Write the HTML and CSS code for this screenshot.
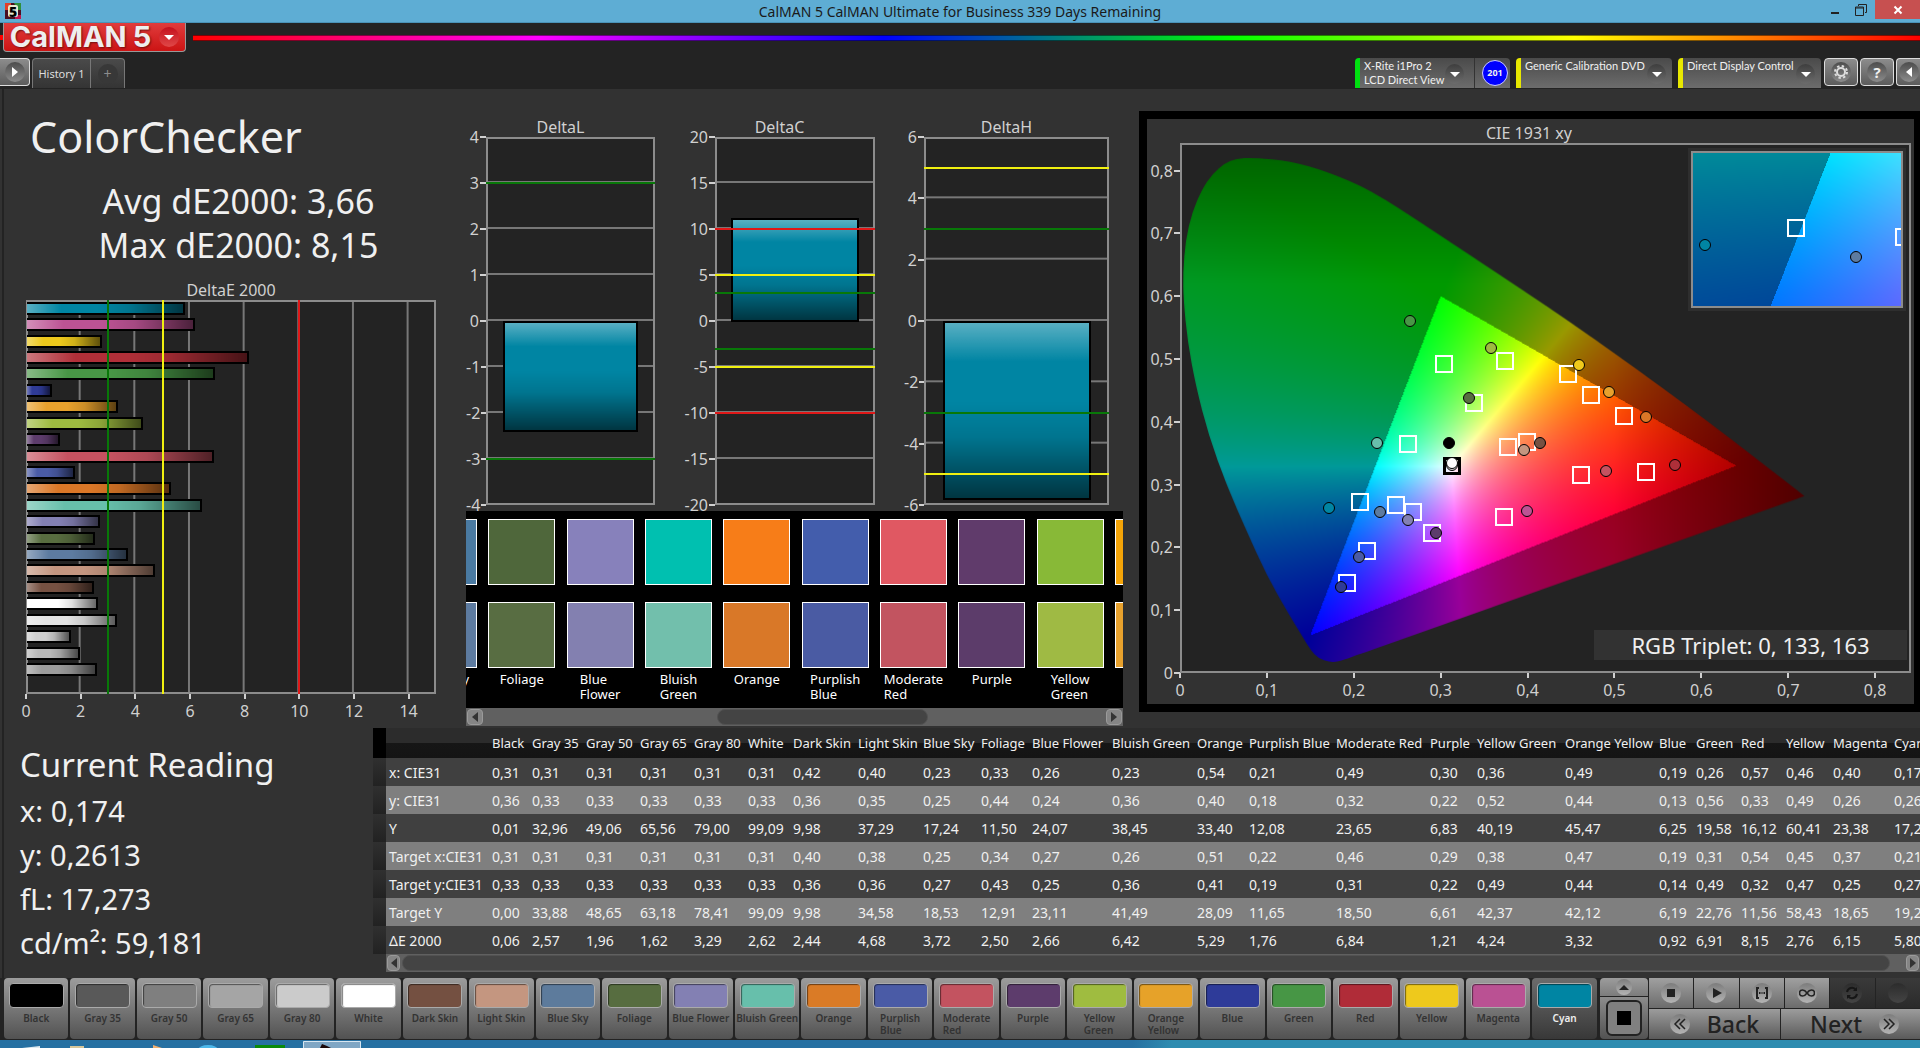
FILE: index.html
```html
<!DOCTYPE html>
<html lang="en">
<head>
<meta charset="utf-8">
<title>CalMAN 5</title>
<link rel="stylesheet" href="styles.css">
</head>
<body>
<div class="titlebar">
  <svg class="app-icon" viewBox="0 0 16 16" width="16" height="16"><rect width="16" height="16" fill="#4a1020"/><path d="M0 0h6v3H3v4H0z" fill="#e0402a"/><path d="M9 0h7v7h-3z" fill="#2f8f3c"/><path d="M10 12h6v4h-6z" fill="#c01850"/><rect x="3" y="2" width="10" height="12" rx="2" fill="#e6ead2"/><text x="4" y="14" font-size="14" font-weight="900">5</text></svg>
  <h1 class="window-title">CalMAN 5 CalMAN Ultimate for Business 339 Days Remaining</h1>
  <div class="window-controls">
    <button class="win-btn" aria-label="Minimize"><svg width="12" height="12" viewBox="0 0 12 12"><path d="M2 8h8v2H2z" fill="#222"/></svg></button>
    <button class="win-btn" aria-label="Restore"><svg width="12" height="12" viewBox="0 0 12 12" fill="none" stroke="#222"><path d="M3.500 2V.5h8v8H10M.5 3h8v8.500h-8zM.5 4h8"/></svg></button>
    <button class="win-btn win-close" aria-label="Close"><svg width="10" height="10" viewBox="0 0 10 10"><path d="M1.500 1.500l7 7M8.500 1.500l-7 7" stroke="#fff" stroke-width="2"/></svg></button>
  </div>
</div>

<header class="app-header">
  <div class="brand-row">
    <span class="rainbow-start"></span>
    <button class="logo"><span>CalMAN</span><span>5</span><i class="knob knob-red"><b class="tri-down"></b></i></button>
    <div class="rainbow"></div>
  </div>
  <div class="tab-row">
    <button class="square-btn play-btn" aria-label="Expand"><i class="knob"><b class="tri-right"></b></i></button>
    <nav class="tabs"><button class="tab">History 1</button><button class="tab tab-add" aria-label="Add tab"><i class="knob knob-dark">+</i></button></nav>
    <div class="devices">
      <div class="device meter"><button class="device-btn"><span>X-Rite i1Pro 2<br>LCD Direct View</span><i class="knob knob-fade"><b class="tri-down"></b></i></button><span class="badge">201</span></div>
      <div class="device source"><button class="device-btn"><span>Generic Calibration DVD</span><i class="knob knob-fade"><b class="tri-down"></b></i></button></div>
      <div class="device display"><button class="device-btn"><span>Direct Display Control</span><i class="knob knob-fade"><b class="tri-down"></b></i></button></div>
      <button class="square-btn" aria-label="Settings"><i class="knob"><svg width="16" height="16" viewBox="0 0 16 16" fill="none" stroke="#ddd"><circle cx="8" cy="8" r="4" stroke-width="2"/><circle cx="8" cy="8" r="6" stroke-width="2" stroke-dasharray="2.400 2.310"/></svg></i></button>
      <button class="square-btn help" aria-label="Help"><i class="knob">?</i></button>
      <button class="square-btn cut" aria-label="Collapse"><i class="knob"><b class="tri-left"></b></i></button>
    </div>
  </div>
</header>

<main class="workspace">
  <section class="overview">
    <h2 class="page-title">ColorChecker</h2>
    <div class="stats"><p>Avg dE2000: 3,66</p><p>Max dE2000: 8,15</p></div>
    <div class="de-chart">
      <h3 class="chart-title">DeltaE 2000</h3>
      <div class="plot de-plot">
        <div class="row"><i class="hbar" style="--v:5.80;--c:#0085a3"></i></div>
        <div class="row"><i class="hbar" style="--v:6.15;--c:#bc5394"></i></div>
        <div class="row"><i class="hbar" style="--v:2.76;--c:#ecc81c"></i></div>
        <div class="row"><i class="hbar" style="--v:8.15;--c:#b02f38"></i></div>
        <div class="row"><i class="hbar" style="--v:6.91;--c:#489646"></i></div>
        <div class="row"><i class="hbar" style="--v:0.92;--c:#2f3b97"></i></div>
        <div class="row"><i class="hbar" style="--v:3.32;--c:#e7a12d"></i></div>
        <div class="row"><i class="hbar" style="--v:4.24;--c:#9ebb40"></i></div>
        <div class="row"><i class="hbar" style="--v:1.21;--c:#5d3c6c"></i></div>
        <div class="row"><i class="hbar" style="--v:6.84;--c:#c55260"></i></div>
        <div class="row"><i class="hbar" style="--v:1.76;--c:#4a5ba6"></i></div>
        <div class="row"><i class="hbar" style="--v:5.29;--c:#da7727"></i></div>
        <div class="row"><i class="hbar" style="--v:6.42;--c:#67bfab"></i></div>
        <div class="row"><i class="hbar" style="--v:2.66;--c:#8380b3"></i></div>
        <div class="row"><i class="hbar" style="--v:2.50;--c:#586d40"></i></div>
        <div class="row"><i class="hbar" style="--v:3.72;--c:#5d7ba0"></i></div>
        <div class="row"><i class="hbar" style="--v:4.68;--c:#c49680"></i></div>
        <div class="row"><i class="hbar" style="--v:2.44;--c:#765142"></i></div>
        <div class="row"><i class="hbar" style="--v:2.62;--c:#ffffff"></i></div>
        <div class="row"><i class="hbar" style="--v:3.29;--c:#e4e4e4"></i></div>
        <div class="row"><i class="hbar" style="--v:1.62;--c:#cecece"></i></div>
        <div class="row"><i class="hbar" style="--v:1.96;--c:#b8b8b8"></i></div>
        <div class="row"><i class="hbar" style="--v:2.57;--c:#9c9c9c"></i></div>
        <div class="row"></div>
        <i class="vlimit ok" style="left:20%"></i><i class="vlimit warn" style="left:33.330%"></i><i class="vlimit bad" style="left:66.670%"></i>
      </div>
      <div class="x-axis de-axis"><span>0</span><span>2</span><span>4</span><span>6</span><span>8</span><span>10</span><span>12</span><span>14</span></div>
    </div>
  </section>

  <section class="deltas">
    <div class="delta-charts">
      <div class="delta l">
        <h3 class="chart-title">DeltaL</h3>
        <div class="y-axis"><span>4</span><span>3</span><span>2</span><span>1</span><span>0</span><span>-1</span><span>-2</span><span>-3</span><span>-4</span></div>
        <div class="plot">
          <i class="vbar" style="top:50%;height:30.200%"></i>
          <i class="hlimit ok" style="top:12.500%"></i><i class="hlimit ok" style="top:87.500%"></i>
        </div>
      </div>
      <div class="delta c">
        <h3 class="chart-title">DeltaC</h3>
        <div class="y-axis"><span>20</span><span>15</span><span>10</span><span>5</span><span>0</span><span>-5</span><span>-10</span><span>-15</span><span>-20</span></div>
        <div class="plot">
          <i class="vbar" style="top:22%;height:28.200%"></i>
          <i class="hlimit bad" style="top:25%"></i><i class="hlimit warn" style="top:37.500%"></i><i class="hlimit ok" style="top:42.500%"></i>
          <i class="hlimit ok" style="top:57.500%"></i><i class="hlimit warn" style="top:62.500%"></i><i class="hlimit bad" style="top:75%"></i>
        </div>
      </div>
      <div class="delta h">
        <h3 class="chart-title">DeltaH</h3>
        <div class="y-axis"><span>6</span><span>4</span><span>2</span><span>0</span><span>-2</span><span>-4</span><span>-6</span></div>
        <div class="plot">
          <i class="vbar" style="top:50%;height:48.700%"></i>
          <i class="hlimit warn" style="top:8.330%"></i><i class="hlimit ok" style="top:25%"></i>
          <i class="hlimit ok" style="top:75%"></i><i class="hlimit warn" style="top:91.670%"></i>
        </div>
      </div>
    </div>
    <div class="compare">
      <div class="compare-track">
        <div class="pair"><i style="background:#4a7aa2"></i><i style="background:#5d7ba0"></i><span>Blue Sky</span></div>
        <div class="pair"><i style="background:#4f673b"></i><i style="background:#586d42"></i><span>Foliage</span></div>
        <div class="pair"><i style="background:#8781bb"></i><i style="background:#8380b0"></i><span>Blue<br>Flower</span></div>
        <div class="pair"><i style="background:#00c0b0"></i><i style="background:#72bfac"></i><span>Bluish<br>Green</span></div>
        <div class="pair"><i style="background:#f77d18"></i><i style="background:#d97828"></i><span>Orange</span></div>
        <div class="pair"><i style="background:#435dac"></i><i style="background:#4a5ba3"></i><span>Purplish<br>Blue</span></div>
        <div class="pair"><i style="background:#e05862"></i><i style="background:#c25460"></i><span>Moderate<br>Red</span></div>
        <div class="pair"><i style="background:#603b6b"></i><i style="background:#5c3c6a"></i><span>Purple</span></div>
        <div class="pair"><i style="background:#88b937"></i><i style="background:#9fba44"></i><span>Yellow<br>Green</span></div>
        <div class="pair"><i style="background:#f4a408"></i><i style="background:#e7a12d"></i><span>Orange<br>Yellow</span></div>
      </div>
    </div>
    <div class="scrollbar compare-scroll"><button aria-label="Scroll left"><b class="tri-left"></b></button><div class="track"><i class="thumb"></i></div><button aria-label="Scroll right"><b class="tri-right"></b></button></div>
  </section>

  <section class="cie">
    <h3 class="chart-title">CIE 1931 xy</h3>
    <div class="y-axis cie-y"><span>0,8</span><span>0,7</span><span>0,6</span><span>0,5</span><span>0,4</span><span>0,3</span><span>0,2</span><span>0,1</span><span>0</span></div>
    <div class="plot cie-plot" id="diagram">
      <canvas width="730" height="528"></canvas>
      <div class="inset" id="inset"><canvas width="208" height="152"></canvas></div>
      <div class="triplet">RGB Triplet: 0, 133, 163</div>
    </div>
    <div class="x-axis cie-x"><span>0</span><span>0,1</span><span>0,2</span><span>0,3</span><span>0,4</span><span>0,5</span><span>0,6</span><span>0,7</span><span>0,8</span></div>
  </section>
</main>

<section class="results">
  <div class="reading">
    <h2>Current Reading</h2>
    <p>x: 0,174</p><p>y: 0,2613</p><p>fL: 17,273</p><p>cd/m²: 59,181</p>
  </div>
  <div class="grid-wrap">
    <table>
      <colgroup><col style="width:13px"><col style="width:103px"><col style="width:40px"><col style="width:54px"><col style="width:54px"><col style="width:54px"><col style="width:54px"><col style="width:45px"><col style="width:65px"><col style="width:65px"><col style="width:58px"><col style="width:51px"><col style="width:80px"><col style="width:85px"><col style="width:52px"><col style="width:87px"><col style="width:94px"><col style="width:47px"><col style="width:88px"><col style="width:94px"><col style="width:37px"><col style="width:45px"><col style="width:45px"><col style="width:47px"><col style="width:61px"><col style="width:45px"></colgroup>
      <thead><tr><td class="sel"></td><td></td><th>Black</th><th>Gray 35</th><th>Gray 50</th><th>Gray 65</th><th>Gray 80</th><th>White</th><th>Dark Skin</th><th>Light Skin</th><th>Blue Sky</th><th>Foliage</th><th>Blue Flower</th><th>Bluish Green</th><th>Orange</th><th>Purplish Blue</th><th>Moderate Red</th><th>Purple</th><th>Yellow Green</th><th>Orange Yellow</th><th>Blue</th><th>Green</th><th>Red</th><th>Yellow</th><th>Magenta</th><th>Cyan</th></tr></thead>
      <tbody>
      <tr><td class="sel"></td><th>x: CIE31</th><td>0,31</td><td>0,31</td><td>0,31</td><td>0,31</td><td>0,31</td><td>0,31</td><td>0,42</td><td>0,40</td><td>0,23</td><td>0,33</td><td>0,26</td><td>0,23</td><td>0,54</td><td>0,21</td><td>0,49</td><td>0,30</td><td>0,36</td><td>0,49</td><td>0,19</td><td>0,26</td><td>0,57</td><td>0,46</td><td>0,40</td><td>0,17</td></tr>
      <tr><td class="sel"></td><th>y: CIE31</th><td>0,36</td><td>0,33</td><td>0,33</td><td>0,33</td><td>0,33</td><td>0,33</td><td>0,36</td><td>0,35</td><td>0,25</td><td>0,44</td><td>0,24</td><td>0,36</td><td>0,40</td><td>0,18</td><td>0,32</td><td>0,22</td><td>0,52</td><td>0,44</td><td>0,13</td><td>0,56</td><td>0,33</td><td>0,49</td><td>0,26</td><td>0,26</td></tr>
      <tr><td class="sel"></td><th>Y</th><td>0,01</td><td>32,96</td><td>49,06</td><td>65,56</td><td>79,00</td><td>99,09</td><td>9,98</td><td>37,29</td><td>17,24</td><td>11,50</td><td>24,07</td><td>38,45</td><td>33,40</td><td>12,08</td><td>23,65</td><td>6,83</td><td>40,19</td><td>45,47</td><td>6,25</td><td>19,58</td><td>16,12</td><td>60,41</td><td>23,38</td><td>17,27</td></tr>
      <tr><td class="sel"></td><th>Target x:CIE31</th><td>0,31</td><td>0,31</td><td>0,31</td><td>0,31</td><td>0,31</td><td>0,31</td><td>0,40</td><td>0,38</td><td>0,25</td><td>0,34</td><td>0,27</td><td>0,26</td><td>0,51</td><td>0,22</td><td>0,46</td><td>0,29</td><td>0,38</td><td>0,47</td><td>0,19</td><td>0,31</td><td>0,54</td><td>0,45</td><td>0,37</td><td>0,21</td></tr>
      <tr><td class="sel"></td><th>Target y:CIE31</th><td>0,33</td><td>0,33</td><td>0,33</td><td>0,33</td><td>0,33</td><td>0,33</td><td>0,36</td><td>0,36</td><td>0,27</td><td>0,43</td><td>0,25</td><td>0,36</td><td>0,41</td><td>0,19</td><td>0,31</td><td>0,22</td><td>0,49</td><td>0,44</td><td>0,14</td><td>0,49</td><td>0,32</td><td>0,47</td><td>0,25</td><td>0,27</td></tr>
      <tr><td class="sel"></td><th>Target Y</th><td>0,00</td><td>33,88</td><td>48,65</td><td>63,18</td><td>78,41</td><td>99,09</td><td>9,98</td><td>34,58</td><td>18,53</td><td>12,91</td><td>23,11</td><td>41,49</td><td>28,09</td><td>11,65</td><td>18,50</td><td>6,61</td><td>42,37</td><td>42,12</td><td>6,19</td><td>22,76</td><td>11,56</td><td>58,43</td><td>18,65</td><td>19,20</td></tr>
      <tr><td class="sel"></td><th>ΔE 2000</th><td>0,06</td><td>2,57</td><td>1,96</td><td>1,62</td><td>3,29</td><td>2,62</td><td>2,44</td><td>4,68</td><td>3,72</td><td>2,50</td><td>2,66</td><td>6,42</td><td>5,29</td><td>1,76</td><td>6,84</td><td>1,21</td><td>4,24</td><td>3,32</td><td>0,92</td><td>6,91</td><td>8,15</td><td>2,76</td><td>6,15</td><td>5,80</td></tr>
      </tbody>
    </table>
    <div class="scrollbar table-scroll"><button aria-label="Scroll left"><b class="tri-left"></b></button><div class="track"><i class="thumb"></i></div><button aria-label="Scroll right"><b class="tri-right"></b></button></div>
  </div>
</section>

<footer class="patches">
  <div class="patch-list">
    <button><i style="background:#000000"></i><span>Black</span></button>
    <button><i style="background:#595959"></i><span>Gray 35</span></button>
    <button><i style="background:#7f7f7f"></i><span>Gray 50</span></button>
    <button><i style="background:#a5a5a5"></i><span>Gray 65</span></button>
    <button><i style="background:#cbcbcb"></i><span>Gray 80</span></button>
    <button><i style="background:#ffffff"></i><span>White</span></button>
    <button><i style="background:#745041"></i><span>Dark Skin</span></button>
    <button><i style="background:#c49680"></i><span>Light Skin</span></button>
    <button><i style="background:#5d7b9c"></i><span>Blue Sky</span></button>
    <button><i style="background:#576d40"></i><span>Foliage</span></button>
    <button><i style="background:#8380b3"></i><span>Blue Flower</span></button>
    <button><i style="background:#67bfab"></i><span>Bluish Green</span></button>
    <button><i style="background:#da7b26"></i><span>Orange</span></button>
    <button><i style="background:#4a5ba6"></i><span>Purplish<br>Blue</span></button>
    <button><i style="background:#c35360"></i><span>Moderate<br>Red</span></button>
    <button><i style="background:#5d3c6c"></i><span>Purple</span></button>
    <button><i style="background:#9fbc40"></i><span>Yellow<br>Green</span></button>
    <button><i style="background:#e6a229"></i><span>Orange<br>Yellow</span></button>
    <button><i style="background:#2e3b99"></i><span>Blue</span></button>
    <button><i style="background:#479645"></i><span>Green</span></button>
    <button><i style="background:#b02c38"></i><span>Red</span></button>
    <button><i style="background:#eec91c"></i><span>Yellow</span></button>
    <button><i style="background:#ba5193"></i><span>Magenta</span></button>
    <button class="active"><i style="background:#0085a3"></i><span>Cyan</span></button>
  </div>
  <div class="pattern">
    <button class="up" aria-label="More patterns"><i class="knob knob-light"><b class="tri-up"></b></i></button>
    <button class="window-pattern" aria-label="Window pattern"><i></i></button>
  </div>
  <div class="transport">
    <div class="transport-row">
      <button aria-label="Stop"><i class="knob knob-light"><svg width="16" height="16"><path d="M4 4h8v8H4z" fill="#222"/></svg></i></button>
      <button aria-label="Play"><i class="knob knob-light"><svg width="16" height="16"><path d="M5 3l9 5-9 5z" fill="#222"/></svg></i></button>
      <button aria-label="Read series"><i class="knob knob-light"><svg width="16" height="16" fill="none" stroke="#222" stroke-width="2"><path d="M5 3H3v10h2M11 3h2v10h-2M5 8h1.500M7.500 8h1M9.500 8H11"/></svg></i></button>
      <button aria-label="Continuous"><i class="knob knob-light"><svg width="16" height="16" fill="none" stroke="#222" stroke-width="1.500"><path d="M8 8C6 5 4.500 5 3.500 5a3 3 0 000 6C4.500 11 6 11 8 8s3.500-3 4.500-3a3 3 0 010 6C11.500 11 10 11 8 8z"/></svg></i></button>
      <button class="off" aria-label="Refresh"><i class="knob knob-off"><svg width="16" height="16" fill="none" stroke="#161616" stroke-width="2"><path d="M3 7a5 5 0 019-2M13 9a5 5 0 01-9 2"/><path d="M13 2v4H9zM3 14v-4h4z" fill="#161616" stroke="none"/></svg></i></button>
      <button class="off" aria-label="Record"><i class="knob knob-off"></i></button>
    </div>
    <div class="nav-row">
      <button><i class="knob knob-light"><svg width="14" height="14" fill="none" stroke="#222" stroke-width="1.500"><path d="M7 2L2 7l5 5M12 2L7 7l5 5"/></svg></i>Back</button>
      <button class="next">Next<i class="knob knob-light"><svg width="14" height="14" fill="none" stroke="#222" stroke-width="1.500"><path d="M2 2l5 5-5 5M7 2l5 5-5 5"/></svg></i></button>
    </div>
  </div>
</footer>
<div class="taskbar">
  <svg width="370" height="8" viewBox="0 0 370 8"><path d="M22 8l18-2v2z" fill="#dfeaf0"/><path d="M70 6h14v2H70z" fill="#d8c79a"/><path d="M153 5l9 3h-9z" fill="#f0b070"/><ellipse cx="208" cy="10" rx="10" ry="5" fill="#4db8ea"/><path d="M255 5h30v3h-30z" fill="#0a8a0a"/><path d="M303.500 8V1.500h57V8" fill="#7fa6c4" stroke="#d8e6f0"/><path d="M320 8l2-4 5 2 4 2z" fill="#1c0808"/></svg>
</div>
<script src="app.js"></script>
</body>
</html>
```
FILE: styles.css
```css
* { box-sizing: border-box; }
body {
  margin: 0;
  min-height: 100vh;
  display: flex;
  flex-direction: column;
  overflow: hidden;
  background: #323232;
  color: #f0f0f0;
  font-family: "Noto Sans", "Open Sans", sans-serif;
  font-size: 16px;
}
h1, h2, h3, p { margin: 0; font-weight: 400; }
button { font: inherit; color: inherit; padding: 0; border: 0; background: none; display: flex; align-items: center; justify-content: center; }
i { font-style: normal; display: block; }

/* arrows */
.tri-down, .tri-up, .tri-left, .tri-right { display: block; border: 5px solid transparent; }
.tri-down { border-top-color: #fff; border-bottom: 0; }
.tri-up { border-bottom-color: #222; border-top: 0; }
.tri-left { border-right: 6px solid #fff; border-left: 0; }
.tri-right { border-left: 6px solid #fff; border-right: 0; }
.knob {
  width: 20px; height: 20px; flex: none; border-radius: 50%;
  display: flex; align-items: center; justify-content: center;
  background: linear-gradient(#4c4c4c, #8c8c8c);
}
.knob-red { background: linear-gradient(#c4101c, #e04848); }
.knob-dark { background: #383838; color: #8c8c8c; font-size: 14px; }
.knob-fade { background: linear-gradient(#3e3e3e, #6c6c6c); }
.knob-light { background: linear-gradient(#7c7c7c, #b4b4b4); }
.knob-off { background: linear-gradient(#2c2c2c, #444); }

/* window title */
.titlebar {
  display: grid; grid-template-columns: 1fr auto 1fr;
  height: 23px; background: #5eadd4; border-bottom: 1px solid #4a93b8;
}
.app-icon { margin: 3px 5px; }
.window-title { font-size: 14px; line-height: 23px; color: #1a1a1a; }
.window-controls { display: flex; justify-content: flex-end; align-items: flex-start; }
.win-btn { width: 24px; height: 19px; margin-right: 2px; }
.win-close { width: 45px; margin: 0; background: #c75050; }

/* brand, tabs, devices */
.app-header { background: #232323; padding-bottom: 1px; }
.brand-row { display: flex; align-items: center; }
.rainbow-start { width: 3px; height: 5px; background: #f00; }
.logo {
  width: 183px; height: 29px; gap: 6px; flex: none;
  background: linear-gradient(#e03c3c, #cc1414);
  border: 1px solid #999; border-top: 0; border-radius: 0 0 4px 4px;
  font: 700 29px/26px "Inter", sans-serif; color: #eee; text-shadow: 1px 1px 2px #701010;
}
.logo .knob { margin-left: 2px; }
.rainbow {
  flex: 1; height: 6px; margin-left: 7px;
  border: 1px solid rgba(0, 0, 0, .5); border-width: 1px 0;
  background: linear-gradient(90deg, #f00, #f0f, #00f, #0f0, #ff0, #f00);
}
.tab-row { display: flex; padding-top: 6px; height: 36px; }
.square-btn {
  width: 34px; height: 28px; flex: none;
  background: linear-gradient(#8c8c8c, #5c5c5c); border: 1px solid #ddd; border-radius: 4px;
}
.square-btn.play-btn { width: 30px; border-left: 0; border-radius: 0 4px 4px 0; }
.square-btn.cut { width: 24px; border-right: 0; border-radius: 4px 0 0 4px; }
.square-btn.help { font-size: 15px; font-weight: 700; }
.tabs { display: flex; margin-left: 2px; border: 1px solid #777; border-bottom: 0; border-radius: 4px 4px 0 0; background: linear-gradient(#4a4a4a, #343434); }
.tab { width: 57px; font-size: 11px; color: #ddd; }
.tab-add { width: 34px; border-left: 1px solid #777; }
.devices { display: flex; gap: 2px; margin-left: auto; }
.device {
  display: flex; align-items: center; margin-right: 4px;
  border-left: 5px solid #e8e800; border-radius: 4px 4px 0 0;
  background: linear-gradient(#4a4a4a, #6c6c6c); font: 11px/14px "Lato", sans-serif;
}
.device.meter { width: 155px; border-left-color: #00e010; }
.device.source { width: 156px; }
.device.display { width: 143px; margin-right: 1px; }
.device-btn { flex: 1; align-self: stretch; justify-content: space-between; align-items: flex-start; padding: 1px 6px 0 4px; text-align: left; white-space: nowrap; }
.device-btn .knob { margin-top: 5px; width: 19px; }
.meter .device-btn { padding-right: 10px; border-right: 1px solid #333; }
.badge {
  width: 26px; height: 26px; margin: 0 2px 0 7px; border-radius: 50%; border: 1px solid #ccf;
  background: #00f; font: 700 9px/24px "Noto Sans", sans-serif; text-align: center;
}

/* workspace */
.workspace {
  flex: 1; display: grid; grid-template-columns: 446fr 689fr 781fr;
  margin-left: 2px; border-left: 2px solid #232323;
}
.workspace > * { min-width: 0; }
.chart-title { font-size: 16px; line-height: 20px; text-align: center; color: #d0d0d0; }
.plot { position: relative; background-color: #232323; box-shadow: inset 0 0 0 2px #8c8c8c; min-width: 0; }
.x-axis, .y-axis { display: flex; justify-content: space-between; color: #d0d0d0; font-size: 16px; }
.y-axis { flex-direction: column; }
.y-axis span { height: 0; display: flex; align-items: center; justify-content: flex-end; gap: 1px; }
.y-axis span::after { content: ""; width: 6px; height: 2px; background: #d0d0d0; }
.x-axis span { width: 0; display: flex; flex-direction: column; align-items: center; line-height: 20px; }
.x-axis span::before { content: ""; width: 2px; height: 5px; margin-bottom: 2px; background: #d0d0d0; }
.ok { background: #087808; }
.warn { background: #f0f010; }
.bad { background: #e01818; }

.overview { padding: 20px 14px 7px 22px; display: flex; flex-direction: column; }
.page-title { font-size: 43px; line-height: 56px; margin-left: 4px; }
.stats { margin: 14px 0 13px; font-size: 34px; line-height: 44px; text-align: center; padding-left: 15px; white-space: nowrap; }
.de-chart { flex: 1; display: flex; flex-direction: column; }
.de-plot {
  flex: 1; display: flex; flex-direction: column; padding-left: 1px;
  background-image: linear-gradient(90deg, transparent calc(100% - 2px), #777 0);
  background-size: calc(100% * 2 / 15) 100%;
}
.row { flex: 1; display: flex; align-items: center; }
.hbar {
  height: 13px; width: calc(var(--v) / 15 * 100%); border: 2px solid #000; border-left: 0;
  background: linear-gradient(90deg, rgba(255,255,255,.35), transparent 22%, transparent 45%, rgba(0,0,0,.12) 65%, rgba(0,0,0,.6)), var(--c);
}
.vlimit { position: absolute; top: 0; bottom: 0; width: 2px; margin-left: -1px; }
.de-axis { padding-right: calc(100% / 15); }

/* delta charts */
.deltas { padding: 28px 16px 2px; display: flex; flex-direction: column; }
.delta-charts { flex: 1; display: flex; gap: 29px; padding: 0 14px 6px 0; }
.delta { display: grid; grid-template: 20px 1fr / 20px 1fr; }
.delta .chart-title { grid-column: 1 / -1; }
.delta.l { flex: 189; }
.delta.c { flex: 191; grid-template-columns: 31px 1fr; }
.delta.h { flex: 205; }
.delta .plot {
  background-image: linear-gradient(transparent calc(100% - 2px), #777 0);
  background-size: 100% 12.500%;
}
.delta.h .plot { background-size: 100% calc(100% / 6); }
.vbar {
  position: absolute; left: 10%; width: 80%; border: 2px solid #000;
  background: linear-gradient(rgba(255,255,255,.35), transparent 22%, transparent 45%, rgba(0,0,0,.12) 65%, rgba(0,0,0,.6)), #0085a3;
}
.hlimit { position: absolute; left: 0; right: 0; height: 2px; margin-top: -1px; }

/* colour comparison */
.compare { background: #000; overflow: hidden; height: 197px; position: relative; }
.compare-track { display: flex; justify-content: space-between; width: 772px; margin-left: -56px; padding-top: 8px; }
.pair { width: 67px; flex: none; text-align: center; font-size: 13px; line-height: 15px; color: #fff; }
.pair i { height: 66px; border: 1px solid #fff; margin-bottom: 17px; }
.pair i + i { margin-bottom: 4px; }
.pair span { display: inline-block; text-align: left; }

.scrollbar { display: flex; height: 18px; background: #606060; padding: 1px; }
.scrollbar button { width: 16px; background: #858585; border: 1px solid #9a9a9a; border-radius: 4px; }
.scrollbar .tri-left { border-right-color: #333; }
.scrollbar .tri-right { border-left-color: #333; }
.track { flex: 1; }
.thumb { height: 16px; background: #444; border-radius: 8px; border: 1px solid #525252; }
.compare-scroll .thumb { width: 34%; margin-left: 37.500%; }

/* chromaticity diagram */
.cie {
  margin: 22px 0 16px; border: 8px solid #000; border-right-width: 6px; padding: 4px 3px 2px 0;
  display: grid; grid-template: 20px 1fr 29px / 33px 1fr;
}
.cie .chart-title { grid-column: 1 / -1; }
.cie-y { height: 94.800%; align-self: end; }
.cie-plot canvas { display: block; width: 100%; height: 100%; position: absolute; left: 0; top: 0; }
.cie-x { grid-column: 2; width: 95.100%; }
.inset { position: absolute; right: 8px; top: 8px; width: 212px; height: 157px; border: 2px solid #8c8c8c; overflow: hidden; outline: 3px solid #2e2e2e; }
.triplet { position: absolute; right: 4px; bottom: 13px; width: 313px; line-height: 30px; background: #323232; font-size: 22px; text-align: center; }
.target, .measured { position: absolute; transform: translate(-50%, 50%); }
.target { width: 18px; height: 18px; border: 2px solid #fff; }
.target.white-point { border-color: #000; border-width: 3px; }
.measured { width: 12px; height: 12px; border-radius: 50%; border: 1px solid #000; }

/* results */
.results { display: grid; grid-template-columns: 369fr 1547fr; margin-left: 2px; border-left: 2px solid #232323; padding-bottom: 6px; }
.results > * { min-width: 0; }
.reading { padding: 13px 0 0 16px; font-size: 29px; line-height: 44px; }
.reading h2 { font-size: 33px; line-height: 48px; }
.grid-wrap { overflow: hidden; }
table { table-layout: fixed; width: 1563px; border-collapse: collapse; font-size: 14px; white-space: nowrap; }
th, td { padding: 0 0 0 3px; height: 28px; font-weight: 400; text-align: left; }
thead th, thead td { height: 30px; font-size: 13px; background: linear-gradient(#2c2c2c 50%, #161616 50%, #141414); }
tbody tr { background: #404040; }
tbody tr:nth-child(even) { background: #7f7f7f; }
.sel { background: linear-gradient(#303030, #222); }
thead .sel { background: #000; }
.table-scroll { margin-left: 13px; }
.table-scroll button { width: 13px; }
.table-scroll .thumb { margin: 0 16px 0 2px; }

/* patches and transport */
.patches { display: flex; gap: 1px; background: #232323; padding: 0 0 1px 4px; height: 62px; }
.patch-list { flex: 1; display: flex; gap: 2px; margin-right: 2px; }
.patch-list button {
  flex: 1 1 0; min-width: 0; flex-direction: column; justify-content: flex-start; padding-top: 5px; gap: 4px;
  background: linear-gradient(#9c9c9c, #525252); border-radius: 4px; color: #333;
  font-size: 10px; font-weight: 600; line-height: 12px; white-space: nowrap;
}
.patch-list i { width: 55px; height: 25px; border-radius: 4px; border: 1px solid #aaa; box-shadow: inset 1px 1px 1px rgba(0, 0, 0, .5); }
.patch-list span { text-align: left; }
.patch-list .active { background: linear-gradient(#6c6c6c, #383838); color: #eee; }
.pattern { width: 48px; display: flex; flex-direction: column; gap: 1px; }
.pattern button { background: linear-gradient(#9c9c9c, #7c7c7c); border-radius: 4px 4px 0 0; }
.pattern .up { height: 18px; }
.pattern .up .knob { width: 16px; height: 16px; }
.pattern .window-pattern { flex: 1; background: linear-gradient(#8c8c8c, #525252); border-radius: 0 0 4px 4px; }
.window-pattern i { width: 32px; height: 32px; border: 9px solid #808080; outline: 2px solid #222; border-radius: 4px; background: #000; }
.transport { width: 271px; display: flex; flex-direction: column; gap: 1px; }
.transport-row, .nav-row { flex: 1; display: flex; gap: 1px; }
.transport button { flex: 1; background: linear-gradient(#a0a0a0, #6c6c6c); }
.transport .off { background: linear-gradient(#3a3a3a, #2a2a2a); }
.transport .nav-row button { background: linear-gradient(#9c9c9c, #5a5a5a); font-size: 23px; font-weight: 500; line-height: 30px; gap: 17px; color: #222; }
.nav-row .next { padding-left: 8px; }

.taskbar { height: 8px; background: linear-gradient(100deg, #2670a2 59%, #2e8cb0 61%); }
.taskbar svg { display: block; }
```
FILE: app.js
```js
// Spectral boundary of the diagram, as CIE 1931 x, y pairs.
const LOCUS = [
  [.1726,.0173],[.159,.0237],[.1505,.0365],[.1406,.0589],[.1214,.1025],[.0994,.157],[.0779,.2223],[.0535,.2992],
  [.0331,.378],[.018,.458],[.0087,.5285],[.0041,.5926],[.0035,.6374],[.0064,.6887],[.0139,.7335],[.0256,.7707],
  [.0372,.7944],[.0517,.8117],[.0645,.8187],[.0837,.8206],[.1273,.8149],[.1679,.7989],[.2191,.7694],[.29,.7053],
  [.3655,.6361],[.4352,.5721],[.5224,.4875],[.6095,.3985],[.6618,.3427],[.7187,.2819],[.7185,.2815],[.1912,.0218],[.1807,.0179]
];
const GAMUT = [[.64, .33], [.3, .6], [.15, .06]];
const TARGETS = [
  [.3039,.492],[.3742,.4965],[.4468,.4753],[.4736,.4427],[.5113,.4094],[.3388,.4305],[.2621,.3645],[.3777,.36],
  [.3998,.3671],[.4614,.3152],[.5363,.3203],[.2069,.2723],[.2487,.2671],[.2684,.2562],[.373,.2479],[.29,.2229],
  [.2156,.1941],[.1923,.1429]
];
const MEASURED = [
  [.265,.5605,'#499746'],[.3579,.5176,'#9ebb40'],[.4596,.4901,'#efc91b'],[.4939,.4471,'#e7a12d'],
  [.5363,.4074,'#da7727'],[.333,.4382,'#576d40'],[.2266,.3658,'#67bfab'],[.3097,.3658,'#000'],
  [.4143,.3658,'#765142'],[.3963,.3549,'#c49680'],[.4904,.3216,'#c55260'],[.57,.3312,'#ae2f39'],
  [.172,.2627,'#0085a3'],[.2301,.2562,'#5d7ba0'],[.2626,.2434,'#8380b3'],[.2952,.2223,'#5d3c6c'],
  [.3998,.2575,'#bc5394'],[.2063,.1845,'#4a5ba6'],[.1854,.1377,'#2f3b97'],[.3132,.331,'#ccc'],[.3132,.335,'#fff']
];

function inGamut(x, y) {
  return GAMUT.every((a, i) => {
    const b = GAMUT[(i + 1) % 3];
    return (b[0] - a[0]) * (y - a[1]) - (b[1] - a[1]) * (x - a[0]) >= 0;
  });
}

function colour(x, y) {
  const X = x / y, Z = (1 - x - y) / y;
  const rgb = [
    3.2406 * X - 1.5372 - 0.4986 * Z,
    -0.9689 * X + 1.8758 + 0.0415 * Z,
    0.0557 * X - 0.204 + 1.057 * Z
  ].map(v => Math.max(0, v));
  const fade = Math.min(1, 1 - (x - .5) * 2.2, 1 - (y - .62) * 1.7);
  const scale = 255 * fade * (inGamut(x, y) ? 1 : .6) / Math.max(...rgb);
  return rgb.map(v => v * scale);
}

function drawDiagram(box, view) {
  const canvas = box.querySelector('canvas');
  const { width: w, height: h } = canvas;
  const [x0, x1, y0, y1] = view;
  const layer = document.createElement('canvas');
  layer.width = w;
  layer.height = h;
  const image = new ImageData(w, h);
  for (let j = 0; j < h; j++) {
    for (let i = 0; i < w; i++) {
      const c = colour(x0 + (i + .5) / w * (x1 - x0), y1 - (j + .5) / h * (y1 - y0));
      image.data.set([c[0], c[1], c[2], 255], (j * w + i) * 4);
    }
  }
  layer.getContext('2d').putImageData(image, 0, 0);

  const ctx = canvas.getContext('2d');
  const p = LOCUS.map(([x, y]) => [(x - x0) / (x1 - x0) * w, (y1 - y) / (y1 - y0) * h]);
  ctx.beginPath();
  p.forEach((a, i) => {
    const b = p[(i + 1) % p.length];
    const mx = (a[0] + b[0]) / 2, my = (a[1] + b[1]) / 2;
    if (i === 0) ctx.moveTo(mx, my); else ctx.quadraticCurveTo(a[0], a[1], mx, my);
  });
  ctx.quadraticCurveTo(p[0][0], p[0][1], (p[0][0] + p[1][0]) / 2, (p[0][1] + p[1][1]) / 2);
  ctx.clip();
  ctx.drawImage(layer, 0, 0);

  const mark = (x, y, cls, fill) => {
    if (x < x0 || x > x1 + .003 || y < y0 || y > y1) return;
    const el = document.createElement('i');
    el.className = cls;
    el.style.left = (x - x0) / (x1 - x0) * 100 + '%';
    el.style.bottom = (y - y0) / (y1 - y0) * 100 + '%';
    if (fill) el.style.background = fill;
    box.append(el);
  };
  TARGETS.forEach(([x, y]) => mark(x, y, 'target'));
  mark(.3127, .33, 'target white-point');
  MEASURED.forEach(([x, y, fill]) => mark(x, y, 'measured', fill));
}

drawDiagram(document.getElementById('diagram'), [0, .8414, 0, .8437]);
drawDiagram(document.getElementById('inset'), [.1672, .2474, .2298, .3128]);
```
